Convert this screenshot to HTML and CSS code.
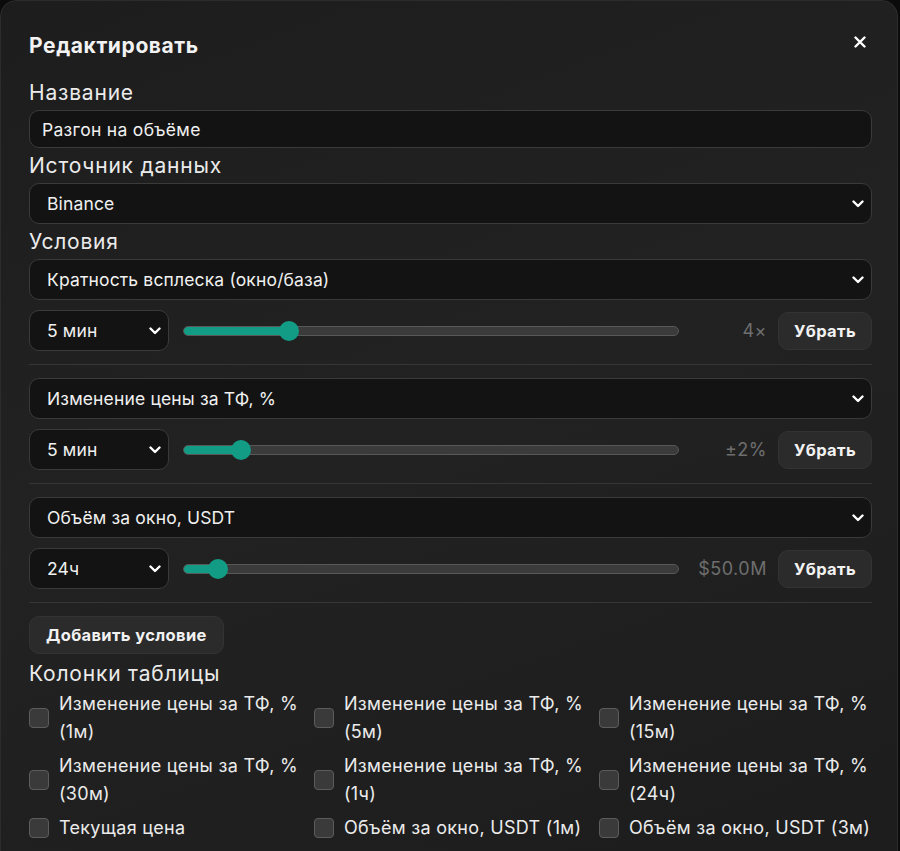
FILE: index.html
```html
<!DOCTYPE html>
<html lang="ru">
<head>
  <meta charset="UTF-8" />
  <title>Редактировать</title>
  <meta name="viewport" content="width=device-width, initial-scale=1.0" />
  <link rel="stylesheet" href="styles.css">
</head>
<body>
  <div class="modal">
    <div class="modal-head">
      <h3>Редактировать</h3>
      <button class="close" aria-label="Закрыть">
        <svg width="12" height="12" viewBox="0 0 12 12"><path d="M1.5 1.5l9 9M10.5 1.5l-9 9" stroke="#fff" stroke-width="2.4" stroke-linecap="round"/></svg>
      </button>
    </div>

    <label class="label">Название</label>
    <input class="field" type="text" value="Разгон на объёме">

    <label class="label">Источник данных</label>
    <select class="field select">
      <option>Binance</option>
    </select>

    <label class="label">Условия</label>

    <div class="cond">
      <select class="field select">
        <option>Кратность всплеска (окно/база)</option>
      </select>
      <div class="cond-row">
        <select class="field select tf">
          <option>5 мин</option>
        </select>
        <input class="range" type="range" min="0" max="100" value="20" style="--p:20%">
        <span class="val">4×</span>
        <button class="btn">Убрать</button>
      </div>
    </div>
    <hr>

    <div class="cond">
      <select class="field select">
        <option>Изменение цены за ТФ, %</option>
      </select>
      <div class="cond-row">
        <select class="field select tf">
          <option>5 мин</option>
        </select>
        <input class="range" type="range" min="0" max="100" value="10" style="--p:10%">
        <span class="val">±2%</span>
        <button class="btn">Убрать</button>
      </div>
    </div>
    <hr>

    <div class="cond">
      <select class="field select">
        <option>Объём за окно, USDT</option>
      </select>
      <div class="cond-row">
        <select class="field select tf">
          <option>24ч</option>
        </select>
        <input class="range" type="range" min="0" max="100" value="5" style="--p:5%">
        <span class="val">$50.0M</span>
        <button class="btn">Убрать</button>
      </div>
    </div>
    <hr>

    <div><button class="btn add">Добавить условие</button></div>

    <label class="label cols-label">Колонки таблицы</label>
    <div class="columns">
      <label class="check"><input type="checkbox"><span>Изменение цены за ТФ, % (1м)</span></label>
      <label class="check"><input type="checkbox"><span>Изменение цены за ТФ, % (5м)</span></label>
      <label class="check"><input type="checkbox"><span>Изменение цены за ТФ, % (15м)</span></label>
      <label class="check"><input type="checkbox"><span>Изменение цены за ТФ, % (30м)</span></label>
      <label class="check"><input type="checkbox"><span>Изменение цены за ТФ, % (1ч)</span></label>
      <label class="check"><input type="checkbox"><span>Изменение цены за ТФ, % (24ч)</span></label>
      <label class="check"><input type="checkbox"><span>Текущая цена</span></label>
      <label class="check"><input type="checkbox"><span>Объём за окно, USDT (1м)</span></label>
      <label class="check"><input type="checkbox"><span>Объём за окно, USDT (3м)</span></label>
    </div>
  </div>
</body>
</html>
```

FILE: styles.css
```css
:root {
  --bg: #0b0b0b;
  --panel: #1e1e1e;
  --field: #131313;
  --border: #3a3a3a;
  --text: #ececec;
  --muted: #6e6e6e;
  --accent: #139c85;
  --btn: #2b2b2b;
}

body {
  margin: 0;
  background-color: var(--bg);
  color: var(--text);
  font-family: Inter, 'Noto Sans', sans-serif;
  height: 100vh;
  overflow: hidden;
}

.modal {
  width: 843px;
  min-height: 900px;
  padding: 20px 25px 0 28px;
  background: linear-gradient(160deg, #1d1d1d 0%, #222 45%, #1c1c1c 100%);
  border: 1px solid #2c2c2c;
  border-radius: 16px;
  display: flex;
  flex-direction: column;
}

.modal-head {
  height: 48px;
  display: flex;
  justify-content: space-between;
  align-items: center;
}

.modal-head h3 {
  margin: 0;
  font-size: 21px;
  font-weight: 700;
  letter-spacing: 0.6px;
  color: #f2f2f2;
}

.close {
  background: none;
  border: none;
  padding: 4px;
  margin: 0 2px 6px 0;
  cursor: pointer;
  display: flex;
}

.label {
  display: block;
  font-size: 21px;
  line-height: 24px;
  letter-spacing: 0.8px;
  margin: 6px 0 5px;
  color: #ebebeb;
}

.modal-head + .label {
  margin-top: 12px;
}

.field {
  box-sizing: border-box;
  width: 100%;
  height: 38px;
  padding: 0 12px;
  background-color: var(--field);
  border: 1px solid var(--border);
  border-radius: 10px;
  color: #f0f0f0;
  font-family: inherit;
  font-size: 17.5px;
  letter-spacing: 0.3px;
  outline: none;
}

.select {
  height: 41px;
  padding: 0 40px 0 17px;
  letter-spacing: 0.15px;
  appearance: none;
  background-image: url("data:image/svg+xml,%3Csvg xmlns='http://www.w3.org/2000/svg' width='12' height='8' viewBox='0 0 12 8'%3E%3Cpath d='M1.5 1.5l4.5 4.5 4.5-4.5' fill='none' stroke='%23fff' stroke-width='2.4' stroke-linecap='round' stroke-linejoin='round'/%3E%3C/svg%3E");
  background-repeat: no-repeat;
  background-position: right 7px center;
}

.cond {
  display: flex;
  flex-direction: column;
  gap: 10px;
}

.cond-row {
  display: flex;
  align-items: center;
  gap: 14px;
}

.tf {
  width: 140px;
  flex: none;
}

.range {
  flex: 1;
  margin: 0;
  height: 20px;
  appearance: none;
  background: transparent;
}

.range::-webkit-slider-runnable-track {
  height: 10px;
  border-radius: 5px;
  border: 1px solid #585858;
  box-sizing: border-box;
  background: linear-gradient(to right, var(--accent) var(--p), #3b3b3b var(--p));
}

.range::-webkit-slider-thumb {
  appearance: none;
  width: 20px;
  height: 20px;
  margin-top: -6px;
  border-radius: 50%;
  background: var(--accent);
  border: none;
}

.val {
  width: 74px;
  flex: none;
  margin-right: -3px;
  text-align: right;
  color: var(--muted);
  font-size: 18px;
  letter-spacing: 0.5px;
}

.btn {
  height: 38px;
  padding: 0 15px;
  background-color: var(--btn);
  border: 1px solid #333;
  border-radius: 10px;
  color: #f2f2f2;
  font-family: inherit;
  font-size: 16.5px;
  font-weight: 700;
  letter-spacing: 0.35px;
  cursor: pointer;
}

.add {
  padding: 0 16px;
}

hr {
  width: 100%;
  margin: 13px 0;
  border: none;
  border-top: 1px solid #363636;
}

.cols-label {
  margin-top: 8px;
}

.columns {
  margin-top: -1px;
  display: grid;
  grid-template-columns: 285px 285px 1fr;
  row-gap: 6px;
}

.check {
  display: flex;
  align-items: center;
  gap: 10px;
  font-size: 18px;
  line-height: 28px;
  letter-spacing: 0.3px;
  color: #ebebeb;
}

.check input {
  appearance: none;
  flex: none;
  margin: 0;
  width: 20px;
  height: 20px;
  border-radius: 4px;
  background: #3a3a3a;
  border: 1px solid #5c5c5c;
}
```
